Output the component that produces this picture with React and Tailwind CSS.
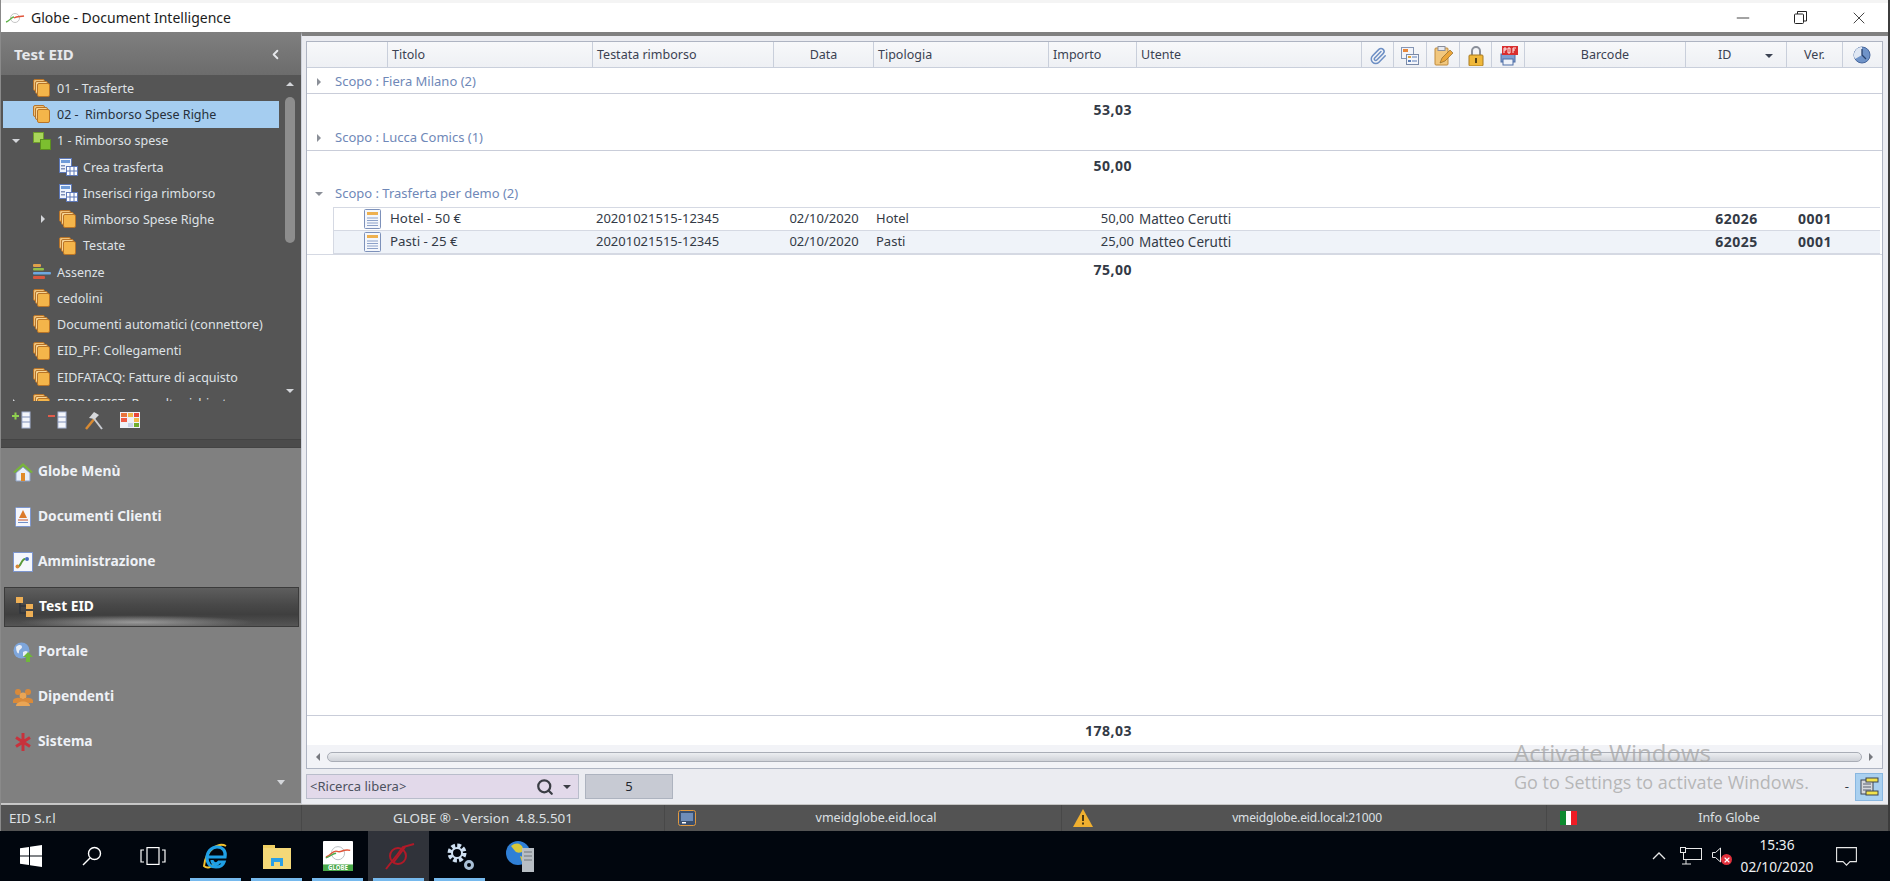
import { ChevronLeft, Search, Paperclip, Minus, X } from "lucide-react";

const FONT = "font-['Noto_Sans','Open_Sans',sans-serif]";
const COLS =
  "grid grid-cols-[81px_205px_181px_100px_175px_88px_225px_32px_33px_33px_32px_33px_161px_101px_56px_37px]";

// --- piccole icone disegnate a mano ---
function StackIcon({ x = "" }) {
  return (
    <svg width="17" height="18" viewBox="0 0 17 18" className={x}>
      <rect x="0.5" y="0.5" width="11" height="11" rx="1.5" fill="#f0c27a" stroke="#b87428" />
      <rect x="2.5" y="2.5" width="12" height="12" rx="1.5" fill="#f6d596" stroke="#b87428" />
      <rect x="4.5" y="4.5" width="12" height="13" rx="1.5" fill="#f4b54a" stroke="#b87428" />
    </svg>
  );
}

function GreenIcon() {
  return (
    <svg width="18" height="18" viewBox="0 0 18 18">
      <rect x="0.5" y="0.5" width="10" height="10" fill="#a9d65a" stroke="#6f9c2c" />
      <rect x="7.5" y="7.5" width="10" height="10" fill="#7cbf2f" stroke="#5b8f1f" />
    </svg>
  );
}

function FormIcon() {
  return (
    <svg width="19" height="18" viewBox="0 0 19 18">
      <rect x="0.5" y="0.5" width="12" height="14" fill="#eef3fb" stroke="#5d78b8" />
      <rect x="2" y="2" width="9" height="3" fill="#6f9bd8" />
      <rect x="2" y="7" width="4" height="1.5" fill="#7d8fb8" />
      <rect x="2" y="10" width="4" height="1.5" fill="#7d8fb8" />
      <rect x="7.5" y="8.5" width="11" height="9" fill="#fff" stroke="#5d78b8" />
      <path d="M11 9v8M15 9v8M8 13h10" stroke="#5d78b8" />
    </svg>
  );
}

function BarsIcon() {
  return (
    <svg width="18" height="18" viewBox="0 0 18 18">
      <rect x="0" y="1" width="8" height="3" rx="1" fill="#e0a04a" />
      <rect x="0" y="5" width="11" height="2.5" rx="1" fill="#93bf4a" />
      <rect x="0" y="9" width="18" height="2.5" rx="1" fill="#6ea8e0" />
      <rect x="0" y="13" width="12" height="3" rx="1" fill="#d8573f" />
    </svg>
  );
}

function AddColIcon({ red }) {
  return (
    <svg width="20" height="18" viewBox="0 0 20 18">
      <path d={red ? "M0 5h7" : "M0 5h7M3.5 1.5v7"} stroke={red ? "#e25b4a" : "#8fd14f"} strokeWidth="2" />
      <rect x="10" y="1" width="8" height="16" fill="#f4f6fb" stroke="#a8b6d6" />
      <path d="M10 6h8M10 11h8" stroke="#7e8fb8" />
    </svg>
  );
}

function HammerIcon() {
  return (
    <svg width="20" height="19" viewBox="0 0 20 19" fill="none">
      <path d="M2 18 11 7" stroke="#d88a32" strokeWidth="2.5" />
      <path d="M18 18 8 5" stroke="#c9ccd2" strokeWidth="2" />
      <path d="M5 7 10 1l5 3-4 4z" fill="#d6d8dc" />
    </svg>
  );
}

function ColorGridIcon() {
  return (
    <svg width="20" height="16" viewBox="0 0 20 16">
      <rect width="20" height="16" fill="#eef1f8" />
      <rect x="1" y="1" width="6" height="4" fill="#e8743c" />
      <rect x="8" y="1" width="5" height="4" fill="#f2b84a" />
      <rect x="14" y="1" width="5" height="4" fill="#e9463a" />
      <rect x="1" y="6" width="6" height="4" fill="#ef5b45" />
      <rect x="14" y="6" width="5" height="4" fill="#f2b84a" />
      <rect x="8" y="11" width="5" height="4" fill="#c9d4ea" />
      <rect x="14" y="11" width="5" height="4" fill="#6fae2c" />
    </svg>
  );
}

function NavIcon({ name }) {
  if (name === "home")
    return (
      <svg width="20" height="20" viewBox="0 0 20 20">
        <path d="M3 11 10 5l7 6v8H3z" fill="#e8eef8" stroke="#8ea3c8" />
        <path d="M0 10 10 1l10 9-2 1-8-7-8 7z" fill="#78b53a" />
        <rect x="8" y="11" width="4" height="8" fill="#e08a2a" />
      </svg>
    );
  if (name === "doc")
    return (
      <svg width="18" height="20" viewBox="0 0 18 20">
        <rect x="1.5" y="0.5" width="15" height="19" rx="1" fill="#f4f6fc" stroke="#7d96cf" />
        <path d="M9 3 5 11h8z" fill="#dc7a2a" />
        <path d="M4 13h10" stroke="#c8552a" />
        <path d="M4 15.5h10" stroke="#6f8fc8" />
      </svg>
    );
  if (name === "admin")
    return (
      <svg width="20" height="20" viewBox="0 0 20 20">
        <rect x="0.5" y="0.5" width="19" height="19" fill="#f5f7fc" stroke="#7d96cf" />
        <path d="M4 15c4 1 4-8 8-8" fill="none" stroke="#5a9a3a" strokeWidth="2" />
        <circle cx="4.5" cy="14.5" r="2" fill="#d8893a" />
        <circle cx="14" cy="7" r="2" fill="#4a6fc0" />
      </svg>
    );
  if (name === "tree")
    return (
      <svg width="17" height="20" viewBox="0 0 17 20">
        <path d="M4 5v11h6M4 9h6" fill="none" stroke="#30343c" strokeWidth="1.5" />
        <rect x="0" y="0" width="7" height="6" fill="#eeaf55" />
        <rect x="10" y="7" width="7" height="5" fill="#eeaf55" />
        <rect x="10" y="14" width="7" height="6" fill="#eeaf55" />
      </svg>
    );
  if (name === "globe")
    return (
      <svg width="20" height="20" viewBox="0 0 20 20">
        <circle cx="8.5" cy="8.5" r="8" fill="#7ea6dc" />
        <path d="M3 5c3-3 6-2 6 0s-3 2-3 5-3 1-3-5zM10 10c3-2 5-1 5 1s-3 4-5 3z" fill="#e8eef6" />
        <path d="M15 10l5 5h-3v5h-4v-5h-3z" fill="#6fb83a" />
      </svg>
    );
  if (name === "people")
    return (
      <svg width="20" height="20" viewBox="0 0 20 20" fill="#d98a3a">
        <circle cx="5" cy="5" r="3" />
        <circle cx="15" cy="5" r="3" />
        <circle cx="10" cy="9" r="3.4" fill="#eaa555" />
        <path d="M0 14c0-4 10-4 10-1v3H0zM10 13c0-3 10-3 10 1v2H10z" />
        <path d="M3 19c0-6 14-6 14 0z" fill="#eaa555" />
      </svg>
    );
  return (
    <svg width="16" height="20" viewBox="0 0 16 20" fill="none" stroke="#c8323c" strokeWidth="3">
      <path d="M8 1v18M1 5.5l14 9M15 5.5l-14 9" />
    </svg>
  );
}

function TreeRow({ level = 0, icon, label, selected, arrow }) {
  return (
    <div
      className={`relative flex items-center h-[26.25px] shrink-0 w-[276px] ml-[2px] ${
        selected ? "bg-[#a5cdf0] text-[#26303c]" : "text-[#dfe2e6]"
      } ${level === 1 ? "pl-[56px]" : "pl-[30px]"}`}
    >
      {arrow === "down" && (
        <span className="absolute left-[9px] top-[11px] border-x-[4px] border-t-[4px] border-x-transparent border-t-[#d4d6da]" />
      )}
      {arrow === "right" && (
        <span className="absolute left-[38px] top-[9px] border-y-[4px] border-l-[4px] border-y-transparent border-l-[#d4d6da]" />
      )}
      {arrow === "clipped" && (
        <span className="absolute left-[10px] top-[9px] border-y-[4px] border-l-[4px] border-y-transparent border-l-[#d4d6da]" />
      )}
      <span className="w-[24px] shrink-0">{icon}</span>
      <span className="whitespace-pre pt-[2px]">{label}</span>
    </div>
  );
}

function NavItem({ icon, label, active }) {
  return (
    <div className="h-[45px] shrink-0 flex items-center">
      <div
        className={`flex items-center w-[295px] ml-[3px] pl-[9px] gap-[5px] h-[40px] font-bold text-[13.8px] ${
          active
            ? "border border-[#3b3b3b] bg-[radial-gradient(ellipse_40%_18%_at_45%_90%,rgba(215,215,215,0.55),transparent),linear-gradient(180deg,#5e5e5e_0%,#484848_45%,#3f3f3f_70%,#555555_100%)] text-white"
            : "text-[#eef1f6]"
        }`}
      >
        <span className="w-[20px] flex justify-center">
          <NavIcon name={icon} />
        </span>
        <span>{label}</span>
      </div>
    </div>
  );
}

function Sidebar() {
  return (
    <div className="w-[300px] h-full shrink-0 flex flex-col bg-[#808080] border-b border-[#c9c9c9]">
      <div className="h-[43px] shrink-0 flex items-center justify-between pl-[13px] pr-[18px] pt-[2px] bg-[linear-gradient(180deg,#7f7f7f,#6c6c6c)] text-[#e6e8ec] font-bold text-[15px]">
        <span>Test EID</span>
        <ChevronLeft size={15} strokeWidth={3} className="text-[#e6e8ec]" />
      </div>

      <div className="relative h-[326px] shrink-0 bg-[#555555] overflow-hidden flex flex-col text-[12.5px]">
        <TreeRow icon={<StackIcon />} label="01 - Trasferte" />
        <TreeRow icon={<StackIcon />} label="02 -  Rimborso Spese Righe" selected />
        <TreeRow icon={<GreenIcon />} label="1 - Rimborso spese" arrow="down" />
        <TreeRow level={1} icon={<FormIcon />} label="Crea trasferta" />
        <TreeRow level={1} icon={<FormIcon />} label="Inserisci riga rimborso" />
        <TreeRow level={1} icon={<StackIcon />} label="Rimborso Spese Righe" arrow="right" />
        <TreeRow level={1} icon={<StackIcon />} label="Testate" />
        <TreeRow icon={<BarsIcon />} label="Assenze" />
        <TreeRow icon={<StackIcon />} label="cedolini" />
        <TreeRow icon={<StackIcon />} label="Documenti automatici (connettore)" />
        <TreeRow icon={<StackIcon />} label="EID_PF: Collegamenti" />
        <TreeRow icon={<StackIcon />} label="EIDFATACQ: Fatture di acquisto" />
        <TreeRow icon={<StackIcon />} label="EIDRASSIST: Raccolta richieste" arrow="clipped" />

        <span className="absolute left-[285px] top-[7px] border-x-[4px] border-b-[4px] border-x-transparent border-b-[#d4d6da]" />
        <span className="absolute left-[284px] top-[22px] w-[10px] h-[146px] rounded-full bg-[#8d8d8d]" />
        <span className="absolute left-[285px] top-[314px] border-x-[4px] border-t-[4px] border-x-transparent border-t-[#d4d6da]" />
      </div>

      <div className="h-[38px] shrink-0 bg-[#555555] flex items-center gap-[16px] pl-[11px]">
        <AddColIcon />
        <AddColIcon red />
        <HammerIcon />
        <ColorGridIcon />
      </div>
      <div className="h-[9px] shrink-0 bg-[#4b4b4b] border-y border-[#444444]" />

      <div className="relative flex-1 flex flex-col pt-px">
        <NavItem icon="home" label="Globe Menù" />
        <NavItem icon="doc" label="Documenti Clienti" />
        <NavItem icon="admin" label="Amministrazione" />
        <NavItem icon="tree" label="Test EID" active />
        <NavItem icon="globe" label="Portale" />
        <NavItem icon="people" label="Dipendenti" />
        <NavItem icon="gear" label="Sistema" />
        <span className="absolute left-[276px] bottom-[18px] border-x-[4px] border-t-[5px] border-x-transparent border-t-[#d4d6da]" />
      </div>
    </div>
  );
}

function HeadCell({ children, center, className = "" }) {
  return (
    <div
      className={`flex items-center border-r border-[#c9cfdb] px-[4px] pt-[2px] ${
        center ? "justify-center" : ""
      } ${className}`}
    >
      {children}
    </div>
  );
}

function ColumnHeader() {
  return (
    <div className={`${COLS} h-[26px] shrink-0 border-b border-[#c9cfdb] bg-[linear-gradient(180deg,#f7f8fa,#eef0f4)] text-[#3b4252]`}>
      <HeadCell />
      <HeadCell>Titolo</HeadCell>
      <HeadCell>Testata rimborso</HeadCell>
      <HeadCell center>Data</HeadCell>
      <HeadCell>Tipologia</HeadCell>
      <HeadCell>Importo</HeadCell>
      <HeadCell className="px-[3px]">Utente</HeadCell>
      <HeadCell center>
        <Paperclip size={18} className="text-[#6d8fc4]" />
      </HeadCell>
      <HeadCell center>
        <svg width="18" height="18" viewBox="0 0 18 18">
          <rect x="0.5" y="0.5" width="12" height="11" fill="#f2f4fa" stroke="#8696b4" />
          <rect x="2" y="2" width="5" height="3" fill="#e8873a" />
          <rect x="5.5" y="7.5" width="12" height="10" fill="#f4f6fb" stroke="#7a8aa8" />
          <rect x="7" y="9" width="3" height="2" fill="#e0a23a" />
          <rect x="7" y="13" width="3" height="2" fill="#5c7fb8" />
          <path d="M11 10h5M11 14h5" stroke="#5c7fb8" />
        </svg>
      </HeadCell>
      <HeadCell center>
        <svg width="19" height="20" viewBox="0 0 19 20">
          <rect x="1" y="2" width="13" height="17" rx="1" fill="#f1c77e" stroke="#c08a3a" />
          <rect x="4" y="0.5" width="7" height="4" fill="#e8eaf0" stroke="#8a8f9c" />
          <path d="M6 17 8 12l8-8 3 3-8 8z" fill="#eba63a" stroke="#7e5a1e" strokeWidth="0.6" />
        </svg>
      </HeadCell>
      <HeadCell center>
        <svg width="16" height="20" viewBox="0 0 16 20">
          <path d="M4 9V5a4 4 0 0 1 8 0v4" fill="none" stroke="#8a8f9a" strokeWidth="2" />
          <rect x="1" y="9" width="14" height="11" rx="1" fill="#f0b83a" stroke="#a87a20" />
          <rect x="7" y="12" width="2" height="5" fill="#5a4416" />
        </svg>
      </HeadCell>
      <HeadCell center>
        <svg width="20" height="20" viewBox="0 0 20 20">
          <rect x="3" y="8" width="14" height="8" fill="#7f9fd0" stroke="#4f6ea6" />
          <rect x="5" y="13" width="10" height="6" fill="#eef2f9" stroke="#4f6ea6" />
          <rect x="4" y="0" width="16" height="9" fill="#d92e2e" />
          <path d="M6 2v5M6 2h2v2H6M10 2v5h2V2zM15 2v5M15 2h3M15 4h2" fill="none" stroke="#fff" strokeWidth="0.9" />
        </svg>
      </HeadCell>
      <HeadCell center>Barcode</HeadCell>
      <HeadCell className="justify-between pl-[32px] pr-[13px]">
        <span>ID</span>
        <span className="border-x-[4px] border-t-[4px] border-x-transparent border-t-[#3b4252]" />
      </HeadCell>
      <HeadCell center>Ver.</HeadCell>
      <div className="flex items-center justify-center">
        <svg width="18" height="18" viewBox="0 0 18 18">
          <circle cx="9" cy="9" r="8" fill="#6f93c8" stroke="#46669c" />
          <path d="M9 9V1a8 8 0 0 0-7 12z" fill="#dfe7f3" />
          <path d="M9 3v6l4 4" stroke="#29436e" fill="none" strokeWidth="1.3" />
        </svg>
      </div>
    </div>
  );
}

function GroupRow({ label, open }) {
  return (
    <div className={`h-[26px] shrink-0 flex items-center text-[13px] text-[#6f88b8] ${open ? "" : "border-b border-[#c9cdd9] pt-[2px]"}`}>
      <span className="w-[28px] flex justify-center pr-[4px]">
        {open ? (
          <span className="border-x-[4px] border-t-[4px] border-x-transparent border-t-[#8b8f98]" />
        ) : (
          <span className="border-y-[4px] border-l-[4px] border-y-transparent border-l-[#8b8f98]" />
        )}
      </span>
      <span>{label}</span>
    </div>
  );
}

function SummaryRow({ value, h = "h-[30.5px]", className = "" }) {
  return (
    <div className={`${COLS} ${h} shrink-0 items-center font-bold text-[14px] tracking-[0.5px] text-[#333a46] ${className}`}>
      <div className="col-span-5" />
      <div className="text-right pr-[5px]">{value}</div>
    </div>
  );
}

function DataRow({ title, testata, data, tipo, importo, utente, id, alt, first }) {
  const cell = `h-full flex items-center border-b border-[#d5d9e3] ${alt ? "bg-[#eff3f9]" : ""} ${first ? "border-t" : ""}`;
  return (
    <div className={`${COLS} h-[23.5px] shrink-0 items-center text-[13px] text-[#333a46]`}>
      <div className={`${cell} ml-[26px] border-l justify-end pr-[7px]`}>
        <svg width="17" height="20" viewBox="0 0 17 20">
          <rect x="0.5" y="0.5" width="16" height="19" rx="1" fill="#f4f7fc" stroke="#7d91ba" />
          <rect x="3" y="3" width="11" height="3" fill="#eeb04e" />
          <path d="M3 9h11M3 11.5h11M3 14h11M3 16.5h11" stroke="#8ba0c8" />
        </svg>
      </div>
      <div className={`${cell} pl-[2px] text-[13.3px]`}>{title}</div>
      <div className={`${cell} pl-[3px]`}>{testata}</div>
      <div className={`${cell} justify-center`}>{data}</div>
      <div className={`${cell} pl-[2px]`}>{tipo}</div>
      <div className={`${cell} justify-end pr-[3px]`}>{importo}</div>
      <div className={`${cell} pl-[2px] text-[13.5px]`}>{utente}</div>
      <div className={`${cell} col-span-6`} />
      <div className={`${cell} justify-center font-bold text-[14px] tracking-[0.5px]`}>{id}</div>
      <div className={`${cell} justify-center font-bold text-[14px] tracking-[0.5px]`}>0001</div>
      <div className={cell} />
    </div>
  );
}

function GridPanel() {
  return (
    <div className="h-[728px] shrink-0 mr-[5px] bg-white border border-[#aeb4c2] flex flex-col text-[12.5px]">
      <ColumnHeader />
      <GroupRow label="Scopo : Fiera Milano (2)" />
      <SummaryRow value="53,03" />
      <GroupRow label="Scopo : Lucca Comics (1)" />
      <SummaryRow value="50,00" />
      <GroupRow label="Scopo : Trasferta per demo (2)" open />
      <DataRow
        title="Hotel - 50 €"
        testata="20201021515-12345"
        data="02/10/2020"
        tipo="Hotel"
        importo="50,00"
        utente="Matteo Cerutti"
        id="62026"
        first
      />
      <DataRow
        title="Pasti - 25 €"
        testata="20201021515-12345"
        data="02/10/2020"
        tipo="Pasti"
        importo="25,00"
        utente="Matteo Cerutti"
        id="62025"
        alt
      />
      <SummaryRow value="75,00" h="h-[30px]" className="border-t border-[#d5d9e3]" />
      <div className="flex-1" />
      <div className="border-t border-[#c9cdd9]">
        <SummaryRow value="178,03" h="h-[29px]" />
      </div>
      <div className="h-[23px] shrink-0 bg-[#f2f3f7] flex items-center px-[9px] gap-[7px]">
        <span className="border-y-[4px] border-r-[4px] border-y-transparent border-r-[#77797f]" />
        <div className="flex-1 h-[10px] rounded-full border border-[#a9adb6] bg-[linear-gradient(180deg,#eceef1,#cfd2d8)]" />
        <span className="border-y-[4px] border-l-[4px] border-y-transparent border-l-[#77797f]" />
      </div>
    </div>
  );
}

function SearchBar() {
  return (
    <div className="flex items-center h-[35px] shrink-0 text-[13px]">
      <div className="w-[273px] h-[25px] flex items-center justify-between bg-[#e2d9ea] border border-[#b9bdcb] pl-[3px] pr-[7px] text-[#4d5260]">
        <span>&lt;Ricerca libera&gt;</span>
        <span className="flex items-center gap-[9px]">
          <Search size={18} strokeWidth={3} className="text-[#3a3d44]" />
          <span className="border-x-[4px] border-t-[4px] border-x-transparent border-t-[#3a3d44]" />
        </span>
      </div>
      <div className="ml-[6px] w-[88px] h-[25px] flex items-center justify-center bg-[#c7cad3] border border-[#adb3bf] text-[#22262e]">
        5
      </div>
      <div className="flex-1" />
      <span className="text-[#333a46] mr-[6px]">-</span>
      <div className="w-[28px] h-[28px] mr-[5px] flex items-center justify-center bg-[#a9d0f0] border border-[#89b7e0]">
        <svg width="20" height="20" viewBox="0 0 20 20">
          <rect x="2" y="3" width="12" height="14" fill="#d6d8dc" stroke="#3d4450" />
          <path d="M4 7h8M4 10h8M4 13h8" stroke="#5a6270" />
          <rect x="7" y="1" width="12" height="4" fill="#f2e24a" stroke="#3d4450" />
          <rect x="7" y="14" width="12" height="4" fill="#f2e24a" stroke="#3d4450" />
        </svg>
      </div>
    </div>
  );
}

function StatusCell({ w, children, className = "" }) {
  return <div className={`${w} h-full flex items-center justify-center border-r border-[#484848] ${className}`}>{children}</div>;
}

function StatusBar() {
  return (
    <div className="h-[27px] shrink-0 flex items-center bg-[#535353] text-[#dde0e4] text-[12.5px] border-t border-[#c4c4c4]">
      <StatusCell w="w-[301px]" className="justify-start pl-[8px] text-[13.4px]">EID S.r.l</StatusCell>
      <StatusCell w="w-[363px]" className="text-[13.4px]">GLOBE ® - Version&nbsp; 4.8.5.501</StatusCell>
      <div className="w-[397px] h-full flex items-center border-r border-[#484848] pl-[13px]">
        <svg width="18" height="16" viewBox="0 0 18 16">
          <rect x="0.5" y="0.5" width="17" height="15" rx="2" fill="#3a4f6e" stroke="#e29a3e" />
          <rect x="3" y="3" width="12" height="8" fill="#6f8db8" />
          <rect x="4" y="12" width="4" height="1.5" fill="#fff" />
        </svg>
        <span className="w-[300px] ml-[30px] text-center">vmeidglobe.eid.local</span>
      </div>
      <div className="w-[485px] h-full flex items-center border-r border-[#484848] pl-[11px]">
        <svg width="20" height="18" viewBox="0 0 20 18">
          <path d="M10 0 20 18H0z" fill="#f0b030" />
          <rect x="9" y="6" width="2" height="6" fill="#4a3810" />
          <rect x="9" y="13.5" width="2" height="2" fill="#4a3810" />
        </svg>
        <span className="w-[400px] ml-[14px] text-center text-[12px] tracking-[-0.15px]">vmeidglobe.eid.local:21000</span>
      </div>
      <div className="flex-1 h-full flex items-center pl-[13px]">
        <span className="flex w-[17px] h-[14px]">
          <span className="flex-1 bg-[#0d8a2f]" />
          <span className="flex-1 bg-white" />
          <span className="flex-1 bg-[#ee1c25]" />
        </span>
        <span className="w-[304px] text-center">Info Globe</span>
      </div>
    </div>
  );
}

function TaskIcon({ children, active, open }) {
  return (
    <div className={`relative w-[61px] h-full flex items-center justify-center ${active ? "bg-[#30333a]" : ""}`}>
      {children}
      {open && <span className="absolute bottom-0 left-[5px] right-[5px] h-[3px] bg-[#76b9ed]" />}
    </div>
  );
}

function Taskbar() {
  return (
    <div className="h-[50px] shrink-0 flex items-center bg-[#01060e] text-white pl-0">
      <TaskIcon>
        <svg width="22" height="22" viewBox="0 0 22 22" fill="#fff">
          <path d="M0 3.2 9 2v8.5H0zM10 1.8 22 0v10.5H10zM0 11.5h9V20l-9-1.2zM10 11.5h12V22l-12-1.8z" />
        </svg>
      </TaskIcon>
      <TaskIcon>
        <svg width="20" height="20" viewBox="0 0 20 20" fill="none" stroke="#fff" strokeWidth="1.4">
          <circle cx="12.5" cy="7.5" r="6" />
          <path d="M8 12 1 19" />
        </svg>
      </TaskIcon>
      <TaskIcon>
        <svg width="26" height="18" viewBox="0 0 26 18" fill="none" stroke="#fff" strokeWidth="1.2">
          <rect x="7" y="0.6" width="12" height="16.8" />
          <path d="M4 3H1v12h3M22 3h3v12h-3" />
        </svg>
      </TaskIcon>
      <div className="w-[2px]" />
      <TaskIcon open>
        <svg width="30" height="30" viewBox="0 0 30 30" fill="none">
          <path d="M25 5C18 1 5 8 3 25c3 3 8 1 10-2" stroke="#f2c12e" strokeWidth="2" />
          <path d="M7 16h17c1-6-2-10-8-10S6 11 6 17s4 9 9 9 7-2 8-5h-5c-2 3-7 2-7-2" stroke="#1fa0e6" strokeWidth="3.2" />
        </svg>
      </TaskIcon>
      <TaskIcon open>
        <svg width="28" height="26" viewBox="0 0 28 26">
          <rect y="2" width="12" height="6" fill="#f0cf62" />
          <rect y="5" width="28" height="21" fill="#f4d878" />
          <rect x="8" y="15" width="12" height="8" fill="#2ba0e6" />
          <rect x="11" y="19" width="6" height="4" fill="#f4d878" />
        </svg>
      </TaskIcon>
      <TaskIcon open>
        <svg width="30" height="30" viewBox="0 0 32 32">
          <rect width="32" height="32" fill="#fff" rx="1" />
          <rect y="25" width="32" height="7" fill="#49a94a" />
          <text x="16" y="31" textAnchor="middle" fontSize="6.5" fontWeight="700" fill="#fff">GLOBE</text>
          <circle cx="16" cy="13" r="7" fill="none" stroke="#b8bcc0" />
          <path d="M3 17c5 0 7-8 12-6s6-3 14-1" fill="none" stroke="#e0553a" strokeWidth="1.5" />
          <path d="M3 18c5-1 7-5 11-5" fill="none" stroke="#4caa4a" strokeWidth="1.5" />
        </svg>
      </TaskIcon>
      <TaskIcon active open>
        <svg width="32" height="30" viewBox="0 0 32 30" fill="none" stroke="#b01a28" strokeWidth="2">
          <circle cx="15" cy="15" r="8" />
          <path d="M3 28 14 14l6-8 11-3" />
          <path d="M10 22 22 6" />
        </svg>
      </TaskIcon>
      <TaskIcon open>
        <svg width="30" height="30" viewBox="0 0 30 30" fill="none">
          <circle cx="12" cy="12" r="7" stroke="#cfe0f2" strokeWidth="5" strokeDasharray="3.5 2" />
          <circle cx="12" cy="12" r="5" stroke="#cfe0f2" strokeWidth="2" />
          <circle cx="24" cy="24" r="3.5" stroke="#a8bfd6" strokeWidth="3" />
        </svg>
      </TaskIcon>
      <TaskIcon>
        <svg width="30" height="32" viewBox="0 0 30 32">
          <circle cx="12" cy="13" r="12" fill="#2f7fd6" />
          <path d="M5 6c5-4 10-3 12 2s-6 6-8 3zM14 16l6 2-3 7z" fill="#d8c83a" />
          <rect x="16" y="8" width="12" height="24" fill="#b8bec4" />
          <path d="M18 12h8M18 16h8M18 20h8" stroke="#6e747a" />
        </svg>
      </TaskIcon>

      <div className="flex-1" />

      <svg width="14" height="8" viewBox="0 0 14 8" fill="none" stroke="#e8e8e8" strokeWidth="1.3" className="mr-[14px]">
        <path d="M1 7 7 1l6 6" />
      </svg>
      <svg width="22" height="18" viewBox="0 0 22 18" fill="none" stroke="#e8e8e8" className="mr-[10px]">
        <rect x="3.5" y="1.5" width="18" height="11" />
        <rect x="0.5" y="0.5" width="5" height="5" fill="#01060e" />
        <path d="M6 13v4M2 17h9M3.5 8v5" />
      </svg>
      <div className="relative w-[20px] h-[18px] mr-[3px]">
        <svg width="10" height="16" viewBox="0 0 10 16" fill="none" stroke="#e8e8e8">
          <path d="M0.5 5.5h3l5-4.5v14l-5-4.5h-3z" />
        </svg>
        <span className="absolute left-[9px] top-[7px] w-[11px] h-[11px] rounded-full bg-[#e0303c] flex items-center justify-center">
          <X size={8} strokeWidth={3.5} className="text-white" />
        </span>
      </div>
      <div className="w-[84px] flex flex-col items-center text-[13.7px] leading-[22px] text-[#eef0f2]">
        <span>15:36</span>
        <span>02/10/2020</span>
      </div>
      <svg width="21" height="19" viewBox="0 0 21 19" fill="none" stroke="#e8e8e8" strokeWidth="1.1" className="ml-[17px] mr-[33px]">
        <path d="M0.6 0.6h19.8v14H14l-3.5 3.5L7 14.6H0.6z" />
      </svg>
    </div>
  );
}

export default function App() {
  return (
    <div className={`relative w-[1890px] h-[881px] overflow-hidden flex flex-col bg-white ${FONT}`}>
      <div className="h-[831px] shrink-0 flex flex-col border-l border-r-2 border-l-[#8a8a8a] border-r-[#3c3c3c]">
        {/* barra del titolo */}
        <div className="h-[32px] shrink-0 flex items-center bg-white border-t-[3px] border-[#f4f4f4] text-[#1c1c1c] text-[14px]">
          <svg width="20" height="12" viewBox="0 0 20 12" fill="none" className="ml-[4px] mr-[6px]">
            <circle cx="10" cy="6" r="4.5" stroke="#c5c5c5" />
            <path d="M1 10c4-1 5-5 8-5" stroke="#5fb24a" strokeWidth="1.4" />
            <path d="M9 6c3-2 6-1 10-2" stroke="#e0553a" strokeWidth="1.4" />
          </svg>
          <span>Globe - Document Intelligence</span>
          <div className="flex-1" />
          <Minus size={20} className="text-[#222] mr-[41px]" strokeWidth={1} />
          <svg width="13" height="13" viewBox="0 0 13 13" fill="none" stroke="#222" className="mr-[42px]">
            <rect x="0.5" y="3" width="9" height="9.5" rx="1" />
            <path d="M3.5 3V0.5h9V10H10" />
          </svg>
          <X size={20} strokeWidth={1} className="text-[#222] mr-[19px]" />
        </div>

        <div className="flex-1 min-h-0 flex">
          <Sidebar />
          <div className="flex-1 min-w-0 flex flex-col bg-[#ebecf1] pl-[4px] pt-[5px] border-l border-l-[#cfd3dc] border-t-4 border-t-[#808080]">
            <GridPanel />
            <SearchBar />
          </div>
        </div>
        <StatusBar />
      </div>
      <Taskbar />

      {/* filigrana di Windows */}
      <div className="absolute left-[1514px] top-[737px] flex flex-col text-[#a8a8a8]/80 pointer-events-none font-['Open_Sans',sans-serif]">
        <span className="text-[24px] leading-[32px]">Activate Windows</span>
        <span className="text-[18px] leading-[26px]">Go to Settings to activate Windows.</span>
      </div>
    </div>
  );
}
